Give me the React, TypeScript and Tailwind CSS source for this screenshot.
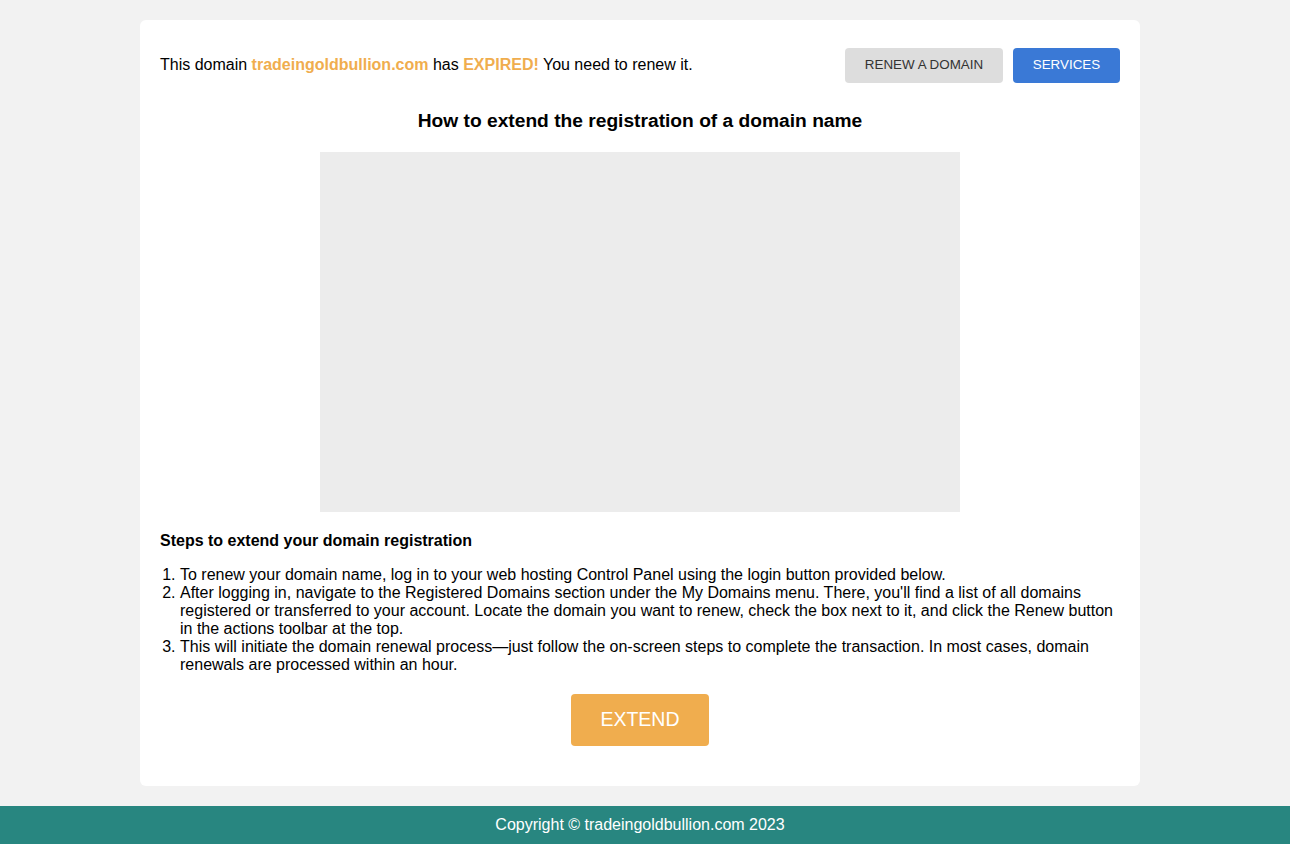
export default function App() {
  return (
    <div className="min-h-[844px] bg-[#f2f2f2] flex flex-col font-['Liberation_Sans',Arial,sans-serif] text-black">
      <main className="flex-1 w-[1280px] pt-5 pb-5">
        <div className="mx-auto w-[1000px] bg-white rounded-md px-5 pt-7 pb-10">
          {/* Top notice */}
          <div className="flex items-center justify-between h-[35px]">
            <p className="text-base leading-[18px] -mt-0.5">
              This domain <span className="font-bold text-[#f0ad4e]">tradeingoldbullion.com</span> has{' '}
              <span className="font-bold text-[#f0ad4e]">EXPIRED!</span> You need to renew it.
            </p>
            <div className="flex gap-2.5">
              <button className="h-[35px] w-[158px] rounded bg-[#dddddd] text-[13.4px] text-[#333]">RENEW A DOMAIN</button>
              <button className="h-[35px] w-[107px] rounded bg-[#3a79d6] text-[13.4px] text-white">SERVICES</button>
            </div>
          </div>

          <h2 className="mt-[27px] text-center text-[19.2px] font-bold leading-[22px]">
            How to extend the registration of a domain name
          </h2>

          <div className="mx-auto mt-5 w-[640px] h-[360px] bg-[#ececec]" />

          <h3 className="mt-5 text-base font-bold leading-[18px]">Steps to extend your domain registration</h3>

          <ol className="mt-4 list-decimal pl-5 text-base leading-[18px]">
            <li>To renew your domain name, log in to your web hosting Control Panel using the login button provided below.</li>
            <li>
              After logging in, navigate to the Registered Domains section under the My Domains menu. There, you'll find a list of all domains registered or transferred to your account. Locate the domain you want to renew, check the box next to it, and click the Renew button in the actions toolbar at the top.
            </li>
            <li>
              This will initiate the domain renewal process—just follow the on-screen steps to complete the transaction. In most cases, domain renewals are processed within an hour.
            </li>
          </ol>

          <div className="mt-5 flex justify-center">
            <button className="h-[52px] w-[138px] rounded bg-[#f0ad4e] text-[19.5px] text-white">EXTEND</button>
          </div>
        </div>
      </main>

      <footer className="h-[38px] bg-[#288680] text-base text-white">
        <div className="w-[1280px] h-full flex items-center justify-center">Copyright © tradeingoldbullion.com 2023</div>
      </footer>
    </div>
  )
}
